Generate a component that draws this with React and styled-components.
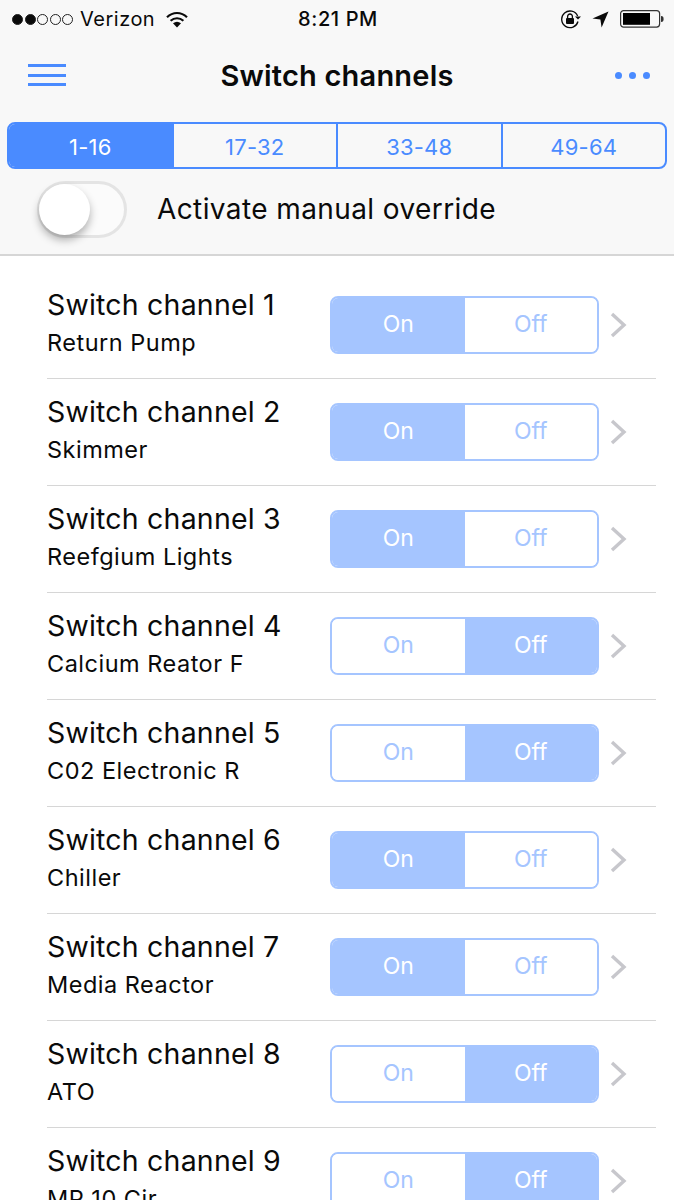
import React from "react";
import styled, { createGlobalStyle } from "styled-components";

const GlobalStyle = createGlobalStyle`
  html, body {
    margin: 0;
    padding: 0;
    background: #fff;
    overflow: hidden;
  }
  * { box-sizing: border-box; }
`;

const BLUE = "#4a8bff";
const PALE = "#a5c5ff";

const Page = styled.div`
  width: 674px;
  height: 1200px;
  overflow: hidden;
  font-family: Inter, "Liberation Sans", sans-serif;
  color: #0a0a0a;
  background: #fff;
`;
const Header = styled.header`
  height: 256px;
  background: #f8f8f8;
  border-bottom: 2px solid #d6d6d6;
`;
const StatusBar = styled.div`
  height: 38px;
  display: grid;
  grid-template-columns: 1fr auto 1fr;
  align-items: center;
  padding: 0 10px 0 12px;
  font-size: 20px;
`;
const StatusLeft = styled.div`
  display: flex;
  align-items: center;
`;
const Dots = styled.div`
  display: flex;
  gap: 1.5px;
  margin-right: 7px;
`;
const Dot = styled.span`
  width: 11px;
  height: 11px;
  border-radius: 50%;
  border: 1px solid #222;
  background: ${(p) => (p.$on ? "#0a0a0a" : "transparent")};
`;
const Carrier = styled.span`
  margin-right: 11px;
  letter-spacing: 0.5px;
`;
const Clock = styled.div`
  font-weight: 500;
  letter-spacing: 0.6px;
`;
const StatusRight = styled.div`
  display: flex;
  align-items: center;
  justify-content: flex-end;
  gap: 11px;
`;
const NavBar = styled.div`
  height: 76px;
  display: grid;
  grid-template-columns: 1fr auto 1fr;
  align-items: center;
  padding: 0 24px 2px 24px;
`;
const NavTitle = styled.h1`
  margin: 0;
  font-size: 29px;
  font-weight: 600;
  letter-spacing: 0.2px;
`;
const MenuButton = styled.div`
  width: 38px;
  height: 22px;
  margin-left: 4px;
  display: flex;
  flex-direction: column;
  justify-content: space-between;
  span {
    height: 3px;
    background: ${BLUE};
  }
`;
const MoreButton = styled.div`
  display: flex;
  justify-content: flex-end;
  gap: 7px;
  span {
    width: 7px;
    height: 7px;
    border-radius: 50%;
    background: ${BLUE};
  }
`;
const Tabs = styled.div`
  display: flex;
  height: 47px;
  margin: 8px 7px 0;
  border: 2px solid ${BLUE};
  border-radius: 8px;
  overflow: hidden;
`;
const Tab = styled.div`
  flex: 1;
  display: flex;
  align-items: center;
  justify-content: center;
  padding-top: 2px;
  font-size: 22px;
  letter-spacing: 0.2px;
  background: ${(p) => (p.$active ? BLUE : "transparent")};
  color: ${(p) => (p.$active ? "#fff" : BLUE)};
  & + & {
    border-left: 2px solid ${BLUE};
  }
`;
const OverrideRow = styled.div`
  display: flex;
  align-items: center;
  height: 80px;
  padding: 0 0 0 37px;
`;
const Toggle = styled.div`
  position: relative;
  width: 90px;
  height: 57px;
  margin-right: 30px;
  border-radius: 29px;
  border: 3px solid #e4e4e4;
  background: #fbfbfb;
`;
const Knob = styled.span`
  position: absolute;
  left: -1px;
  top: 0;
  width: 51px;
  height: 51px;
  border-radius: 50%;
  background: #fff;
  box-shadow: 0 5px 8px rgba(0, 0, 0, 0.3);
`;
const OverrideLabel = styled.span`
  font-size: 28px;
  letter-spacing: 0.4px;
`;
const List = styled.div`
  padding: 16px 18px 0 47px;
`;
const Row = styled.div`
  height: 107px;
  display: flex;
  align-items: center;
  border-bottom: 1px solid #d6d6d6;
`;
const RowText = styled.div`
  flex: 1;
  display: flex;
  flex-direction: column;
  gap: 7px;
  padding-bottom: 5px;
`;
const ChannelName = styled.div`
  font-size: 28.5px;
  line-height: 34px;
  letter-spacing: 0.2px;
`;
const ChannelDevice = styled.div`
  font-size: 23.5px;
  line-height: 28px;
  letter-spacing: 0.5px;
`;
const Switch = styled.div`
  display: flex;
  width: 269px;
  height: 58px;
  border: 2px solid ${PALE};
  border-radius: 8px;
  overflow: hidden;
`;
const SwitchSide = styled.div`
  flex: 1;
  display: flex;
  align-items: center;
  justify-content: center;
  padding-bottom: 2px;
  font-size: 23px;
  background: ${(p) => (p.$active ? PALE : "#fff")};
  color: ${(p) => (p.$active ? "#fff" : PALE)};
`;
const Chevron = styled.svg`
  width: 17px;
  height: 26px;
  margin: 0 29px 0 11px;
  flex: none;
`;

const channels = [
  ["Return Pump", true],
  ["Skimmer", true],
  ["Reefgium Lights", true],
  ["Calcium Reator F", false],
  ["C02 Electronic R", false],
  ["Chiller", true],
  ["Media Reactor", true],
  ["ATO", false],
  ["MP 10 Cir", false],
];

const tabs = ["1-16", "17-32", "33-48", "49-64"];

export default function App() {
  return (
    <Page>
      <GlobalStyle />
      <Header>
        <StatusBar>
          <StatusLeft>
            <Dots>
              {[true, true, false, false, false].map((on, i) => (
                <Dot key={i} $on={on} />
              ))}
            </Dots>
            <Carrier>Verizon</Carrier>
            <svg width="22" height="17" viewBox="0 0 22 17">
              <path d="M1 6.2C6.8.6 15.2.6 21 6.2" fill="none" stroke="#0a0a0a" strokeWidth="2.2" />
              <path d="M4.6 9.8c3.8-3.4 9-3.4 12.8 0" fill="none" stroke="#0a0a0a" strokeWidth="2.2" />
              <path d="M7 12.2c2.6-2 5.4-2 8 0l-4 4.4z" fill="#0a0a0a" />
            </svg>
          </StatusLeft>
          <Clock>8:21 PM</Clock>
          <StatusRight>
            <svg width="21" height="20" viewBox="0 0 21 20">
              <path d="M18 12.5A8.3 8.3 0 1 1 17.6 7" fill="none" stroke="#0a0a0a" strokeWidth="1.3" />
              <path d="M15 7.5h6l-3 3z" fill="#0a0a0a" />
              <rect x="6" y="9" width="8" height="6" rx="1" fill="#0a0a0a" />
              <path d="M7.6 9V7.4a2.4 2.4 0 0 1 4.8 0V9" fill="none" stroke="#0a0a0a" strokeWidth="1.3" />
            </svg>
            <svg width="17" height="17" viewBox="0 0 17 17">
              <path d="M16.5.5 9.6 16.5 8.4 8.6.5 7.4z" fill="#0a0a0a" />
            </svg>
            <svg width="44" height="18" viewBox="0 0 44 18">
              <rect x="0.6" y="0.6" width="39" height="16.5" rx="3" fill="none" stroke="#333" strokeWidth="1.2" />
              <rect x="3" y="3" width="27" height="11.8" fill="#000" />
              <path d="M41 6c2 0 2.6 1.2 2.6 3s-.6 3-2.6 3z" fill="#333" />
            </svg>
          </StatusRight>
        </StatusBar>
        <NavBar>
          <MenuButton>
            <span />
            <span />
            <span />
          </MenuButton>
          <NavTitle>Switch channels</NavTitle>
          <MoreButton>
            <span />
            <span />
            <span />
          </MoreButton>
        </NavBar>
        <Tabs>
          {tabs.map((t, i) => (
            <Tab key={t} $active={i === 0}>
              {t}
            </Tab>
          ))}
        </Tabs>
        <OverrideRow>
          <Toggle>
            <Knob />
          </Toggle>
          <OverrideLabel>Activate manual override</OverrideLabel>
        </OverrideRow>
      </Header>
      <List>
        {channels.map(([device, on], i) => (
          <Row key={i}>
            <RowText>
              <ChannelName>Switch channel {i + 1}</ChannelName>
              <ChannelDevice>{device}</ChannelDevice>
            </RowText>
            <Switch>
              <SwitchSide $active={on}>On</SwitchSide>
              <SwitchSide $active={!on}>Off</SwitchSide>
            </Switch>
            <Chevron viewBox="0 0 17 26">
              <path d="M2 2l12 11L2 24" fill="none" stroke="#c7c7cc" strokeWidth="3.4" />
            </Chevron>
          </Row>
        ))}
      </List>
    </Page>
  );
}
